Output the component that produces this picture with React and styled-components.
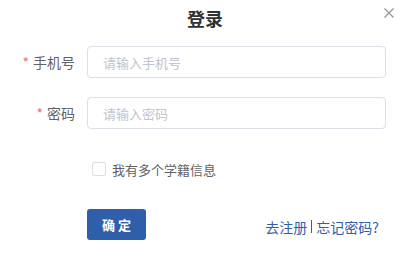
import React from 'react';
import styled, { createGlobalStyle } from 'styled-components';

const GlobalStyle = createGlobalStyle`
    html, body {
        margin: 0;
        padding: 0;
        background: #ffffff;
    }
    body {
        font-family: "Noto Sans CJK SC", "Noto Sans", "Liberation Sans", sans-serif;
    }
    * {
        box-sizing: border-box;
    }
`

const App = () => {
    return (
        <>
            <GlobalStyle />
            <Dialog>
                <Header>
                    <span></span>
                    <Title>登录</Title>
                    <CloseButton aria-label="close">
                        <svg width="10" height="10" viewBox="0 0 10 10">
                            <path d="M0.5 0.5 L9.5 9.5 M9.5 0.5 L0.5 9.5" stroke="#909399" strokeWidth="1.2" fill="none" />
                        </svg>
                    </CloseButton>
                </Header>
                <Form>
                    <FormItem>
                        <Label required>手机号</Label>
                        <Content>
                            <Input placeholder="请输入手机号" />
                        </Content>
                    </FormItem>
                    <FormItem>
                        <Label required>密码</Label>
                        <Content>
                            <Input type="password" placeholder="请输入密码" />
                        </Content>
                    </FormItem>
                    <FormItem offset={5}>
                        <Label></Label>
                        <Content>
                            <CheckLabel>
                                <CheckBox type="checkbox" />
                                <span>我有多个学籍信息</span>
                            </CheckLabel>
                        </Content>
                    </FormItem>
                    <FormItem offset={4}>
                        <Label></Label>
                        <Actions>
                            <SubmitButton>确 定</SubmitButton>
                            <Links>
                                <a href="#register">去注册</a>
                                <Divider />
                                <a href="#forgot">忘记密码?</a>
                            </Links>
                        </Actions>
                    </FormItem>
                </Form>
            </Dialog>
        </>
    )
}

const Dialog = styled.div`
    width: 410px;
    height: 258px;
    background: #fff;
`
const Header = styled.div`
    display: grid;
    grid-template-columns: 1fr auto 1fr;
    height: 36px;
`
const Title = styled.h2`
    margin: 0;
    font-size: 18px;
    font-weight: 700;
    line-height: 36px;
    color: #303133;
`
const CloseButton = styled.button`
    justify-self: end;
    align-self: start;
    margin: 8px 16px 0 0;
    padding: 0;
    width: 10px;
    height: 10px;
    border: none;
    background: none;
    display: flex;
    cursor: pointer;
`
const Form = styled.form`
    display: flex;
    flex-direction: column;
    gap: 19px;
    padding-top: 10px;
`
const FormItem = styled.div`
    display: flex;
    align-items: center;
    height: 32px;
    margin-top: ${props => props.offset || 0}px;
`
const Label = styled.label`
    width: 87px;
    flex-shrink: 0;
    padding-right: 12px;
    text-align: right;
    font-size: 14px;
    line-height: 32px;
    color: #606266;
    &::before{
        content: ${props => props.required ? '"*"' : 'none'};
        color: #f56c6c;
        margin-right: 4px;
    }
`
const Content = styled.div`
    width: 299px;
`
const Input = styled.input`
    width: 100%;
    height: 32px;
    padding: 0 15px;
    border: 1px solid #dcdfe6;
    border-radius: 4px;
    font-family: inherit;
    font-size: 13px;
    color: #606266;
    outline: none;
    &::placeholder{
        color: #c0c4cc;
    }
`
const CheckLabel = styled.label`
    display: flex;
    align-items: center;
    height: 32px;
    padding-left: 5px;
    font-size: 13px;
    color: #606266;
    cursor: pointer;
`
const CheckBox = styled.input`
    appearance: none;
    width: 14px;
    height: 14px;
    margin: 0 6px 0 0;
    border: 1px solid #dcdfe6;
    border-radius: 2px;
    background: #fff;
`
const Actions = styled.div`
    width: 299px;
    display: flex;
    justify-content: space-between;
    align-items: center;
    padding-right: 7px;
`
const SubmitButton = styled.button`
    width: 59px;
    height: 31px;
    border: none;
    border-radius: 3px;
    background: #2f5eab;
    color: #fff;
    font-family: inherit;
    font-size: 13px;
    font-weight: 600;
    cursor: pointer;
`
const Links = styled.div`
    display: flex;
    align-items: center;
    margin-top: 5px;
    font-size: 14px;
    line-height: 20px;
    a{
        color: #2f5eab;
        text-decoration: none;
    }
`
const Divider = styled.span`
    width: 1px;
    height: 13px;
    margin: 0 4px;
    background: #2f5eab;
`

export default App;
